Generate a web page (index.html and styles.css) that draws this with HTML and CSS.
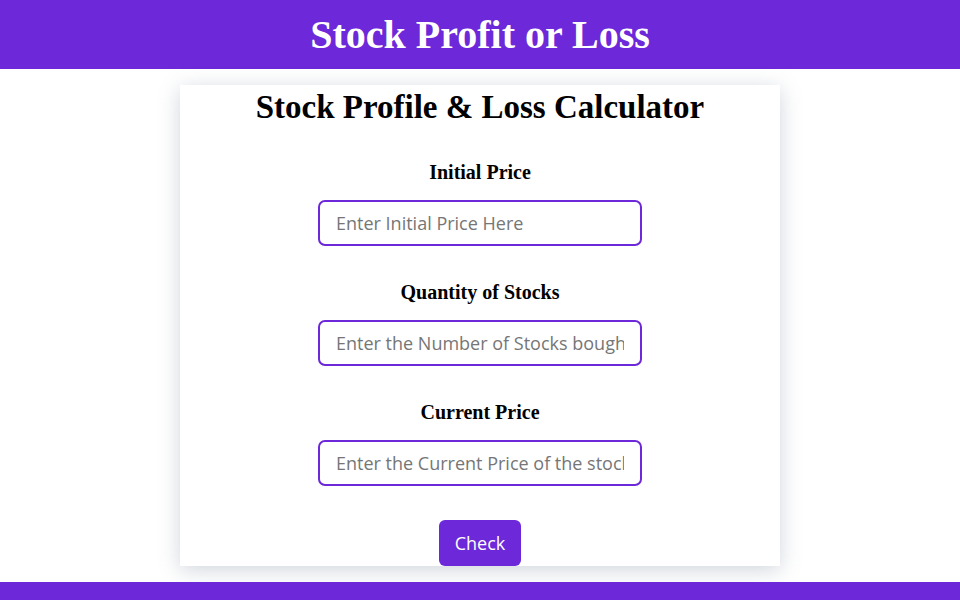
FILE: index.html
```html
<!DOCTYPE html>
<html>
<head>
<meta charset="utf-8">
<link rel="stylesheet" href="styles.css">
</head>
<body>
<header class="top">
  <h1 class="top-title">Stock Profit or Loss</h1>
</header>
<main class="card">
  <h2 class="card-title">Stock Profile &amp; Loss Calculator</h2>
  <div class="field">
    <label class="label">Initial Price</label>
    <input class="input" type="text" placeholder="Enter Initial Price Here">
  </div>
  <div class="field">
    <label class="label">Quantity of Stocks</label>
    <input class="input" type="text" placeholder="Enter the Number of Stocks bought">
  </div>
  <div class="field">
    <label class="label">Current Price</label>
    <input class="input" type="text" placeholder="Enter the Current Price of the stock">
  </div>
  <button class="btn">Check</button>
</main>
<footer class="bottom"></footer>
</body>
</html>
```
FILE: styles.css
```css
* { box-sizing: border-box; }
body {
  margin: 0;
  background: #ffffff;
  font-family: "Open Sans", sans-serif;
}
.top {
  background: #6d28d9;
  height: 69px;
  display: flex;
  align-items: center;
  justify-content: center;
}
.top-title {
  margin: 0;
  color: #fff;
  font-family: "Liberation Serif", serif;
  font-weight: bold;
  font-size: 40px;
}
.card {
  width: 600px;
  margin: 16px auto 0;
  background: #fff;
  box-shadow: 0 4px 20px rgba(100, 116, 139, 0.3);
  display: flex;
  flex-direction: column;
  align-items: center;
}
.card-title {
  margin: 2px 0 0;
  font-family: "Liberation Serif", serif;
  font-weight: bold;
  font-size: 33px;
  line-height: 40px;
  color: #000;
}
.field {
  display: flex;
  flex-direction: column;
  align-items: center;
  margin-top: 32px;
}
.field + .field { margin-top: 33px; }
.label {
  font-family: "Liberation Serif", serif;
  font-weight: bold;
  font-size: 20px;
  line-height: 26px;
  margin-bottom: 15px;
  color: #000;
}
.input {
  width: 324px;
  height: 46px;
  border: 2px solid #6d28d9;
  border-radius: 7px;
  padding: 0 16px;
  font-family: "Open Sans", sans-serif;
  font-size: 18px;
  outline: none;
}
.input::placeholder { color: #767676; }
.btn {
  margin-top: 34px;
  width: 82px;
  height: 46px;
  background: #6d28d9;
  color: #fff;
  border: none;
  border-radius: 6px;
  font-family: "Open Sans", sans-serif;
  font-size: 18px;
}
.bottom {
  background: #6d28d9;
  height: 18px;
  margin-top: 16px;
}
```
